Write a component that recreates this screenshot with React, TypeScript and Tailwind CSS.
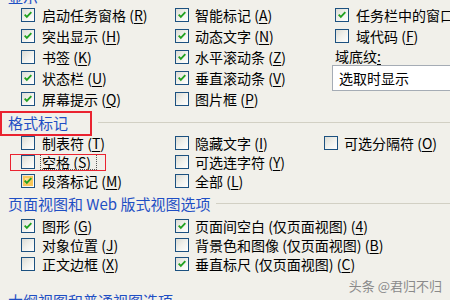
import React from "react";

type Opt = { label: string; key?: string; checked?: boolean; hover?: boolean };

const CheckBox = ({ checked, hover }: { checked?: boolean; hover?: boolean }) => (
  <span className="relative flex h-[14px] w-[14px] shrink-0 items-center justify-center border border-[#1c5180] bg-gradient-to-br from-[#dcdcd5] via-[#f1f1ec] to-white">
    {hover && (
      <span className="absolute inset-[1px] border-2 border-[#f9c65a] bg-gradient-to-br from-[#fde9a6] to-[#f6c04a]" />
    )}
    {checked && (
      <svg viewBox="0 0 12 12" className="relative h-[10px] w-[10px]">
        <path d="M2 5.5 L4.6 8.2 L10 2.6" fill="none" stroke="#21a121" strokeWidth="2.2" />
      </svg>
    )}
  </span>
);

const Label = ({ label, k }: { label: string; k?: string }) => (
  <span className="whitespace-nowrap">
    {label}
    {k && (
      <>
        {" ("}
        <span className="underline underline-offset-2">{k}</span>
        {")"}
      </>
    )}
  </span>
);

const Row = ({ o, h, gap = "gap-[7px]" }: { o: Opt; h: string; gap?: string }) => (
  <div className={`flex items-center ${gap} ${h}`}>
    <CheckBox checked={o.checked} hover={o.hover} />
    <Label label={o.label} k={o.key} />
  </div>
);

const Header = ({ text, boxed }: { text: string; boxed?: boolean }) => (
  <div className="flex h-full items-center">
    <span className="relative whitespace-nowrap pl-[8px] pr-[6px] text-[15px] text-[#1f4fc4]">
      {text}
      {boxed && (
        // red annotation box drawn over the heading
        <span className="absolute left-0 top-[-4px] h-[25px] w-[92px] border-2 border-[#ea2330]" />
      )}
    </span>
    <span className={`h-px flex-1 bg-[#d2d0c4] ${boxed ? "ml-[24px]" : ""}`} />
  </div>
);

const col1: Opt[] = [
  { label: "启动任务窗格", key: "R", checked: true },
  { label: "突出显示", key: "H", checked: true },
  { label: "书签", key: "K" },
  { label: "状态栏", key: "U", checked: true },
  { label: "屏幕提示", key: "Q", checked: true },
];

const col2: Opt[] = [
  { label: "智能标记", key: "A", checked: true },
  { label: "动态文字", key: "N", checked: true },
  { label: "水平滚动条", key: "Z", checked: true },
  { label: "垂直滚动条", key: "V", checked: true },
  { label: "图片框", key: "P" },
];

const view1: Opt[] = [
  { label: "图形", key: "G", checked: true },
  { label: "对象位置", key: "J" },
  { label: "正文边框", key: "X" },
];

const view2: Opt[] = [
  { label: "页面间空白 (仅页面视图)", key: "4", checked: true },
  { label: "背景色和图像 (仅页面视图)", key: "B" },
  { label: "垂直标尺 (仅页面视图)", key: "C", checked: true },
];

export default function App() {
  return (
    <div className="relative h-[300px] w-[450px] overflow-hidden bg-[#f1f0ea] font-['Noto_Sans_CJK_SC',sans-serif] text-[14px] leading-none text-black">
      {/* heading of the section above, mostly scrolled away */}
      <div className="h-[4px] overflow-hidden">
        <div className="-mt-[11px] pl-[8px] text-[15px] text-[#1f4fc4]">显示</div>
      </div>

      <div className="flex">
        <div className="w-[175px] shrink-0 pl-[21px]">
          {col1.map((o) => (
            <Row key={o.label} o={o} h="h-[21px]" />
          ))}
        </div>
        <div className="w-[157px] shrink-0">
          {col2.map((o) => (
            <Row key={o.label} o={o} h="h-[21px]" gap="gap-[6px]" />
          ))}
        </div>
        <div className="min-w-0 flex-1">
          <div className="pl-[3px]">
            <Row o={{ label: "任务栏中的窗口", checked: true }} h="h-[21px]" gap="gap-[7px]" />
            <Row o={{ label: "域代码", key: "F" }} h="h-[21px]" gap="gap-[7px]" />
          </div>
          <div className="flex h-[19px] items-center pl-[3px]">
            域底纹<span className="underline underline-offset-2">:</span>
          </div>
          <div className="flex h-[26px] w-[140px] items-center border border-[#a5acb5] bg-white pl-[6px]">
            选取时显示
          </div>
        </div>
      </div>

      <div className="h-[24px] pt-[3px]">
        <Header text="格式标记" boxed />
      </div>

      <div className="flex">
        <div className="w-[175px] shrink-0 pl-[21px]">
          <Row o={{ label: "制表符", key: "T" }} h="h-[19px]" />
          <div className="relative">
            <Row o={{ label: "空格", key: "S" }} h="h-[19px]" />
            <span className="absolute left-[19px] top-[2px] h-[16px] w-[57px] border border-dotted border-[#555]" />
            <span className="absolute left-[-11px] top-[2px] h-[17px] w-[96px] border border-[#ea2330]" />
          </div>
          <Row o={{ label: "段落标记", key: "M", checked: true, hover: true }} h="h-[19px]" />
        </div>
        <div className="w-[149px] shrink-0">
          <Row o={{ label: "隐藏文字", key: "I" }} h="h-[19px]" gap="gap-[6px]" />
          <Row o={{ label: "可选连字符", key: "Y" }} h="h-[19px]" gap="gap-[6px]" />
          <Row o={{ label: "全部", key: "L" }} h="h-[19px]" gap="gap-[6px]" />
        </div>
        <div className="min-w-0 flex-1">
          <Row o={{ label: "可选分隔符", key: "O" }} h="h-[19px]" gap="gap-[6px]" />
        </div>
      </div>

      <div className="h-[26px]">
        <Header text="页面视图和 Web 版式视图选项" />
      </div>

      <div className="flex">
        <div className="w-[175px] shrink-0 pl-[21px]">
          {view1.map((o) => (
            <Row key={o.label} o={o} h="h-[19px]" />
          ))}
        </div>
        <div className="min-w-0 flex-1">
          {view2.map((o) => (
            <Row key={o.label} o={o} h="h-[19px]" gap="gap-[6px]" />
          ))}
        </div>
      </div>

      <div className="flex h-[20px] items-center justify-end pr-[8px] pt-[4px] text-[13px] text-[#8a8a8a]">
        头条 @君归不归
      </div>
      <div className="pl-[8px] text-[15px] text-[#1f4fc4]">大纲视图和普通视图选项</div>
    </div>
  );
}
